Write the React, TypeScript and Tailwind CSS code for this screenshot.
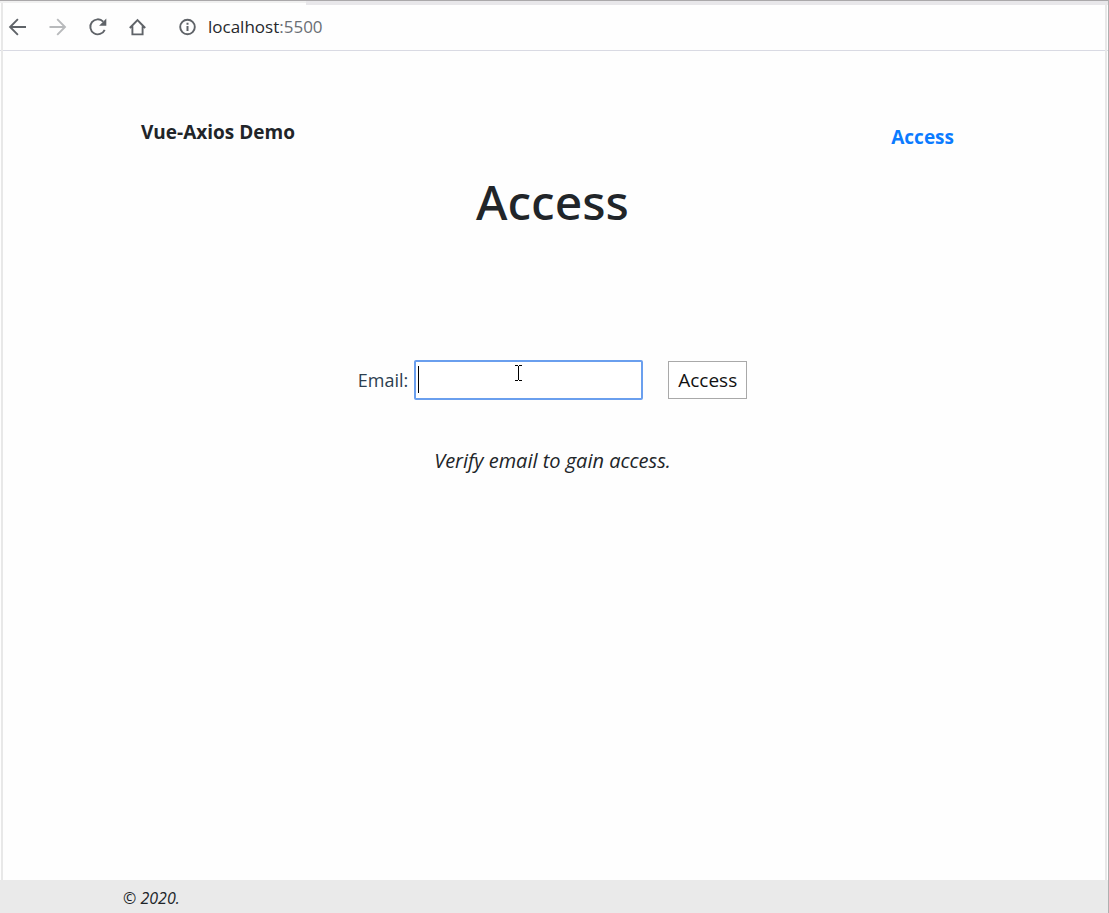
import React from "react";

function BackIcon() {
  return (
    <svg viewBox="0 0 20 20" className="size-5" fill="none" stroke="currentColor" strokeWidth="1.9" aria-hidden="true">
      <path d="M18 10H2.5M9.9 2.2 2.1 10l7.8 7.8" />
    </svg>
  );
}

function ForwardIcon() {
  return (
    <svg viewBox="0 0 20 20" className="size-5" fill="none" stroke="currentColor" strokeWidth="1.9" aria-hidden="true">
      <path d="M1.5 10H17M9.2 2.2 17 10l-7.8 7.8" />
    </svg>
  );
}

function ReloadIcon() {
  return (
    <svg viewBox="0 0 20 20" className="size-5" fill="none" aria-hidden="true">
      <path d="M15.2 4.6A7.5 7.5 0 1 0 16.7 12.8" stroke="currentColor" strokeWidth="1.9" />
      <path d="M18.3 1.6V8.8H11.1Z" fill="currentColor" />
    </svg>
  );
}

function HomeIcon() {
  return (
    <svg viewBox="0 0 20 20" className="size-5" fill="none" stroke="currentColor" strokeWidth="1.9" aria-hidden="true">
      <path d="M1.8 11 9.5 3l7.7 8M4.4 9.2v8.2h10.2V9.2" />
    </svg>
  );
}

function InfoIcon() {
  return (
    <svg viewBox="0 0 20 20" className="size-5" fill="none" stroke="currentColor" aria-hidden="true">
      <circle cx="9.5" cy="10" r="7.3" strokeWidth="1.9" />
      <path d="M9.5 9v5M9.5 5.8v2" strokeWidth="2" />
    </svg>
  );
}

function Toolbar() {
  return (
    <header className="relative flex h-[51px] items-center border-b border-[#d9dae3] pt-1 pl-2 text-[#5f6368]">
      <div className="absolute inset-x-0 top-0 h-px bg-[#aaa8aa]" />
      <div className="absolute top-px right-0 left-0 h-[2px] bg-[#f0f0f0]" />
      <div className="absolute top-px right-0 left-[306px] h-1 bg-[#e8e7ea]" />
      <nav aria-label="Browser" className="flex gap-5">
        <button type="button" aria-label="Back">
          <BackIcon />
        </button>
        <button type="button" aria-label="Forward" className="text-[#b8babc]">
          <ForwardIcon />
        </button>
        <button type="button" aria-label="Reload">
          <ReloadIcon />
        </button>
        <button type="button" aria-label="Home">
          <HomeIcon />
        </button>
      </nav>
      <div className="ml-[30px] flex items-center gap-2.5">
        <InfoIcon />
        <span className="text-[17px] leading-6 text-[#26282c]">
          localhost<span className="text-[#6b6f74]">:5500</span>
        </span>
      </div>
    </header>
  );
}

function TextCursor() {
  return (
    <svg viewBox="0 0 7 16" className="pointer-events-none absolute top-[5px] left-[101px] h-4 w-[7px]" fill="none" stroke="#000" shapeRendering="crispEdges" aria-hidden="true">
      <path d="M0 .5h3M4 .5h3M3.5 1v14M0 15.5h3M4 15.5h3" />
    </svg>
  );
}

export default function App() {
  return (
    <div className="relative flex min-h-screen flex-col bg-[#fefefe] font-['Open_Sans','Noto_Sans',sans-serif] text-[#212529]">
      <Toolbar />
      <div className="pointer-events-none absolute top-[3px] bottom-0 left-[1px] w-[2px] bg-[#e8e8e8]" />
      <div className="pointer-events-none absolute top-[3px] right-[2px] bottom-0 w-[2px] bg-[#e8e8e8]" />
      <div className="pointer-events-none absolute top-0 right-0 bottom-0 z-10 w-px bg-[#b0b0b0]" />

      <div className="flex-1 pr-1">
        <main className="mx-auto w-full max-w-[863px] px-5 pt-[66px]">
          <div className="flex items-start justify-between text-[19px] leading-[30px] font-bold">
            <span>Vue-Axios Demo</span>
            <a href="#access" className="mt-[5px] mr-2.5 text-[#0b7bff]">
              Access
            </a>
          </div>

          <h1 className="mt-5 text-center font-['Noto_Sans',sans-serif] text-5xl leading-[60px] font-medium">Access</h1>

          <form className="mt-[128px] flex items-center justify-center" onSubmit={(e) => e.preventDefault()}>
            <label htmlFor="email" className="mr-1.5 text-lg leading-[30px] text-[#2c3e50]">
              Email:
            </label>
            <span className="relative">
              <input
                id="email"
                type="text"
                className="block h-10 w-[229px] rounded-xs border-2 border-[#6a9fee] bg-white px-1 text-lg caret-transparent outline-none"
              />
              <span className="pointer-events-none absolute top-[6px] left-[4px] h-[27px] w-px bg-black" />
              <TextCursor />
            </span>
            <button type="submit" className="ml-[25px] h-[38px] border border-[#a9a9a9] bg-white px-[9px] text-[19px] text-[#111]">
              Access
            </button>
          </form>

          <p className="mt-[46px] text-center text-xl leading-[30px] italic">Verify email to gain access.</p>
        </main>
      </div>

      <footer className="relative bg-[#eaeaea] pt-[7px] pb-1">
        <p className="mx-auto max-w-[863px] text-base leading-[22px] italic">© 2020.</p>
      </footer>
    </div>
  );
}
